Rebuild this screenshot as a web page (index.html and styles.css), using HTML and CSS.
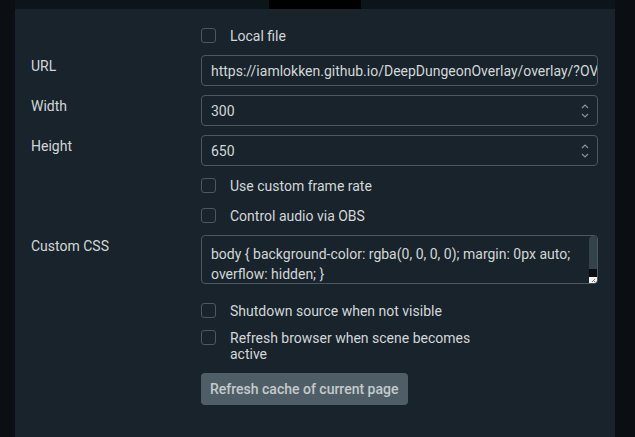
FILE: index.html
```html
<!DOCTYPE html>
<html>
<head>
<meta charset="utf-8">
<link rel="stylesheet" href="styles.css">
</head>
<body>
<div class="frame">
  <div class="topbar"><div class="tab"></div></div>
  <div class="panel">
    <div class="row check-row r-local">
      <div class="label"></div>
      <div class="field check"><span class="box"></span><span class="ctext">Local file</span></div>
    </div>
    <div class="row r-field">
      <div class="label">URL</div>
      <div class="field"><div class="input"><span class="val">https://iamlokken.github.io/DeepDungeonOverlay/overlay/?OVERLAY_WS=ws://127.0.0.1:10501/ws</span></div></div>
    </div>
    <div class="row r-field">
      <div class="label">Width</div>
      <div class="field"><div class="input spin"><span class="val">300</span>
        <svg class="arrows" width="10" height="18" viewBox="0 0 10 18"><path d="M2 6 L5 3 L8 6" fill="none" stroke="#88939a" stroke-width="1.2"/><path d="M2 12 L5 15 L8 12" fill="none" stroke="#88939a" stroke-width="1.2"/></svg>
      </div></div>
    </div>
    <div class="row r-field">
      <div class="label">Height</div>
      <div class="field"><div class="input spin"><span class="val">650</span>
        <svg class="arrows" width="10" height="18" viewBox="0 0 10 18"><path d="M2 6 L5 3 L8 6" fill="none" stroke="#88939a" stroke-width="1.2"/><path d="M2 12 L5 15 L8 12" fill="none" stroke="#88939a" stroke-width="1.2"/></svg>
      </div></div>
    </div>
    <div class="row check-row r-c1">
      <div class="label"></div>
      <div class="field check"><span class="box"></span><span class="ctext">Use custom frame rate</span></div>
    </div>
    <div class="row check-row r-c2">
      <div class="label"></div>
      <div class="field check"><span class="box"></span><span class="ctext">Control audio via OBS</span></div>
    </div>
    <div class="row r-css">
      <div class="label">Custom CSS</div>
      <div class="field"><div class="textarea">body { background-color: rgba(0, 0, 0, 0); margin: 0px auto; overflow: hidden; }
        <div class="sb"><div class="thumb"></div><div class="track"></div><div class="corner"><svg width="8" height="7" viewBox="0 0 8 7"><path d="M6 2 L3 5 M6 4 L5 5" stroke="#555" stroke-width="0.8"/></svg></div></div>
      </div></div>
    </div>
    <div class="row check-row r-c3">
      <div class="label"></div>
      <div class="field check"><span class="box"></span><span class="ctext">Shutdown source when not visible</span></div>
    </div>
    <div class="row check-row r-c4">
      <div class="label"></div>
      <div class="field check"><span class="box"></span><span class="ctext wrap">Refresh browser when scene becomes active</span></div>
    </div>
    <div class="row r-btn">
      <div class="label"></div>
      <div class="field"><button class="btn">Refresh cache of current page</button></div>
    </div>
  </div>
</div>
</body>
</html>
```
FILE: styles.css
```css
html, body {
  margin: 0;
  padding: 0;
  background: #0b0f13;
  font-family: Roboto, "Liberation Sans", sans-serif;
  font-size: 14px;
  color: #d3d7d9;
  overflow: hidden;
}
.frame {
  margin-left: 15px;
  width: 600px;
  height: 437px;
  display: flex;
  flex-direction: column;
}
.topbar {
  height: 9px;
  background: #0c151a;
  flex: none;
}
.tab {
  margin-left: 254px;
  width: 92px;
  height: 9px;
  background: #000;
}
.panel {
  flex: 1;
  background: #18232b;
  padding: 16px 17px 0 16px;
}
.row {
  display: flex;
  align-items: flex-start;
}
.label {
  width: 170px;
  flex: none;
  line-height: 16px;
  padding-top: 3px;
}
.field {
  width: 397px;
  flex: none;
}
.check-row { min-height: 21px; }
.check {
  display: flex;
  align-items: flex-start;
}
.box {
  width: 15px;
  height: 15px;
  box-sizing: border-box;
  border: 1px solid #4b5860;
  border-radius: 3px;
  margin-top: 3px;
  flex: none;
}
.ctext {
  margin-left: 14px;
  line-height: 16px;
  padding-top: 3px;
}
.ctext.wrap { width: 260px; }
.r-local { margin-top: 0; }
.r-field { margin-top: 9px; }
.r-field:nth-child(2) { margin-top: 9px; }
.r-c1 { margin-top: 9px; }
.r-c2 { margin-top: 9px; }
.r-css { margin-top: 9px; }
.r-c3 { margin-top: 16px; }
.r-c4 { margin-top: 6px; }
.r-btn { margin-top: 11px; }
.input {
  height: 31px;
  box-sizing: border-box;
  border: 1px solid #4b5860;
  border-radius: 4px;
  padding: 0 9px;
  display: flex;
  align-items: center;
  overflow: hidden;
  white-space: nowrap;
}
.val { flex: none; }
.spin { justify-content: space-between; padding-right: 7px; }
.arrows { flex: none; }
.textarea {
  position: relative;
  height: 49px;
  box-sizing: border-box;
  border: 1px solid #4b5860;
  border-radius: 4px;
  padding: 8px 22px 0 9px;
  line-height: 20px;
  overflow: hidden;
}
.sb {
  position: absolute;
  right: 0;
  top: 0;
  width: 8px;
  height: 48px;
  display: flex;
  flex-direction: column;
}
.thumb {
  height: 33px;
  background: #34424a;
  border-radius: 4px 4px 0 0;
}
.track {
  height: 8px;
  background: #0a0e11;
}
.corner {
  height: 7px;
  background: #f2f2f2;
  display: flex;
}
.btn {
  height: 32px;
  width: 207px;
  border: none;
  border-radius: 4px;
  background: #4f5e66;
  color: #c4cacd;
  font-family: Roboto, "Liberation Sans", sans-serif;
  font-size: 14px;
  font-weight: 500;
  padding: 0 9px;
  text-align: left;
}
```
